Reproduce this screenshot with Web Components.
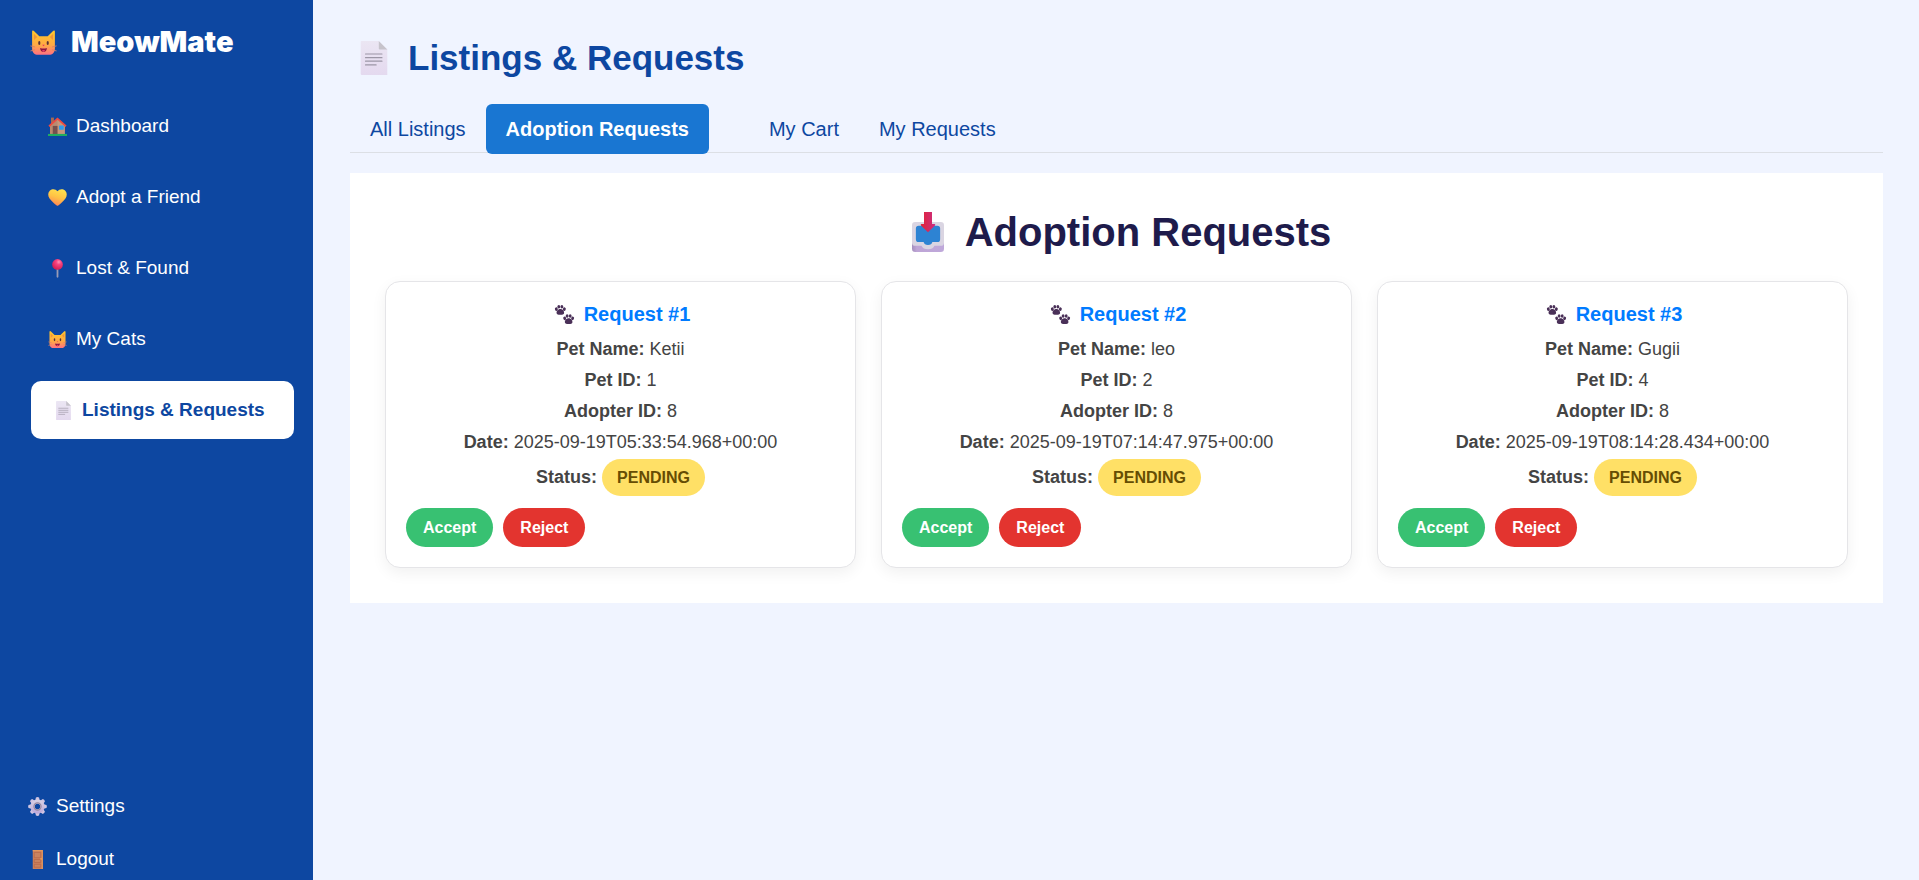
<!DOCTYPE html>
<html lang="en">
<head>
<meta charset="utf-8">
<title>MeowMate – Listings &amp; Requests</title>
<style>
  body { margin: 0; font-family: "Liberation Sans", Arial, sans-serif; background: #f0f4ff; }
</style>
</head>
<body>
<meow-app>
  <meow-sidebar slot="sidebar">
    <meow-nav-item icon="house">Dashboard</meow-nav-item>
    <meow-nav-item icon="heart">Adopt a Friend</meow-nav-item>
    <meow-nav-item icon="pin">Lost &amp; Found</meow-nav-item>
    <meow-nav-item icon="cat">My Cats</meow-nav-item>
    <meow-nav-item icon="page" active>Listings &amp; Requests</meow-nav-item>
    <meow-nav-item slot="footer" icon="gear" compact>Settings</meow-nav-item>
    <meow-nav-item slot="footer" icon="door" compact>Logout</meow-nav-item>
  </meow-sidebar>
  <meow-page-title>Listings &amp; Requests</meow-page-title>
  <meow-tabs>
    <meow-tab>All Listings</meow-tab>
    <meow-tab active>Adoption Requests</meow-tab>
    <meow-tab slot="mine">My Cart</meow-tab>
    <meow-tab slot="mine">My Requests</meow-tab>
  </meow-tabs>
  <meow-panel>
    <span slot="heading">Adoption Requests</span>
    <meow-request number="1" pet="Ketii" pet-id="1" adopter="8" date="2025-09-19T05:33:54.968+00:00"></meow-request>
    <meow-request number="2" pet="leo" pet-id="2" adopter="8" date="2025-09-19T07:14:47.975+00:00"></meow-request>
    <meow-request number="3" pet="Gugii" pet-id="4" adopter="8" date="2025-09-19T08:14:28.434+00:00"></meow-request>
  </meow-panel>
</meow-app>

<script>
const define = (name, render) => customElements.define(name, class extends HTMLElement {
  connectedCallback() {
    if (this.shadowRoot) return;
    const template = document.createElement('template');
    template.innerHTML = render(this);
    this.attachShadow({ mode: 'open' }).append(template.content.cloneNode(true));
  }
});

const tooth = Array.from({ length: 8 }, (_, i) =>
  `<path d="M12.2 6 13.4 0.8Q16 -0.4 18.6 0.8L19.8 6Z" transform="rotate(${i * 45} 16 16)"/>`).join('');
const paw = (x, y) => `<g transform="translate(${x} ${y})">
  <ellipse cx="2.3" cy="7" rx="2.400" ry="3" transform="rotate(-20 2.3 7)"/><ellipse cx="6.4" cy="3" rx="2.400" ry="3"/>
  <ellipse cx="11.600" cy="3" rx="2.400" ry="3"/><ellipse cx="15.700" cy="7" rx="2.400" ry="3" transform="rotate(20 15.7 7)"/>
  <path d="M9 6.800c4 0 6.800 4 6.300 7.200-.4 2.500-3.300 2.400-6.300 2.400s-5.900.1-6.300-2.400C2.200 10.800 5 6.800 9 6.800z"/></g>`;

const icons = {
  cat: `<defs><linearGradient id="g" x2="0" y2="1"><stop offset=".1" stop-color="#ffc42e"/><stop offset=".6" stop-color="#ffaa45"/><stop offset="1" stop-color="#ff6f83"/></linearGradient></defs>
    <path d="M2.500 3.200C2.500 1.500 4 1.600 5 2.700L11 8.500h10l6-5.800C28 1.600 29.500 1.500 29.500 3.200V23c0 5-3 7.500-7 7.500h-13c-4 0-7-2.500-7-7.500z" fill="url(#g)"/>
    <path d="M4.500 5.500 8.500 9.600 4.800 13z" fill="#f0963a"/><path d="M27.500 5.500 23.500 9.600 27.200 13z" fill="#f0963a"/>
    <ellipse cx="11" cy="16.500" rx="1.300" ry="2.400" fill="#5a3236"/><ellipse cx="21" cy="16.500" rx="1.300" ry="2.400" fill="#5a3236"/>
    <path d="M14.500 18.800h3L16 20.400z" fill="#e12a62"/><path d="M12 22.600q4 1.200 8 0c0 3-1.800 4.600-4 4.600s-4-1.600-4-4.600z" fill="#8d1740"/><path d="M14 25.500q2-1.200 4 0-1 1.400-2 1.400t-2-1.400z" fill="#f0426d"/>
    <path d="M0.500 20 6 21.300M0.500 26 6 24.600M31.500 20 26 21.300M31.500 26 26 24.600" stroke="#d98066" stroke-width="1" fill="none"/>`,
  house: `<path d="M5 1h5v10H5z" fill="#a56953"/><path d="M3.500 14 16 3l12.500 11v15h-25z" fill="#c7977c"/><path d="M3.500 14 16 3v26H3.500z" fill="#b98a70"/>
    <path d="M.8 14.500 16 .8l15.200 13.700-1.800 2.200L16 4.800 2.600 16.700z" fill="#ef4a40"/>
    <path d="M8 15h8v14H8z" fill="#76504e"/><rect x="18.500" y="14.500" width="8" height="7" rx="1" fill="#2f9cf0"/><path d="M0 28.500h32V32H0z" fill="#20ad60"/>`,
  heart: `<defs><linearGradient id="g" x1=".7" x2=".35" y2="1"><stop stop-color="#ffe34e"/><stop offset=".5" stop-color="#ffc245"/><stop offset="1" stop-color="#ff8257"/></linearGradient></defs>
    <path d="M16 5.500C19 1.300 25 .8 28.700 4.200c3.800 3.600 3.800 9.100.7 13.400C26 22.400 20.500 27 17.300 29.600q-1.300 1-2.600 0C11.500 27 6 22.400 2.600 17.600-.5 13.300-.5 7.800 3.300 4.200 7 .8 13 1.300 16 5.500z" fill="url(#g)"/>`,
  pin: `<defs><radialGradient id="g" cx=".62" cy=".27" r=".7"><stop stop-color="#ff93b5"/><stop offset=".35" stop-color="#f94380"/><stop offset="1" stop-color="#d61f55"/></radialGradient></defs>
    <path d="M14.500 16h3v14.500q-1.500 2-3 0z" fill="#9a9bb5"/><circle cx="16" cy="9.200" r="9" fill="url(#g)"/>`,
  page: `<defs><linearGradient id="g" x2="0" y2="1"><stop stop-color="#ebe6f3"/><stop offset="1" stop-color="#e4d9ef"/></linearGradient></defs>
    <path d="M4.500 0H20.500L28.500 8v24h-24q-1 0-1-1V1q0-1 1-1z" fill="url(#g)"/><path d="M20.500 0 28.500 8h-7q-1 0-1-1z" fill="#c6c3cb"/>
    <path d="M8 12.200h15.500M8 15.700h15.500M8 19h15.500M8 22.500h10" stroke="#9c96a6" stroke-width="1.100" stroke-linecap="round"/>`,
  gear: `<defs><linearGradient id="g" x2="0" y2="1"><stop stop-color="#d9d3e4"/><stop offset="1" stop-color="#bda8da"/></linearGradient></defs>
    <g fill="#cfc4e2">${tooth}</g><path fill-rule="evenodd" d="M16 4a12 12 0 1 0 0 24 12 12 0 1 0 0-24zm0 7.500a4.500 4.500 0 1 1 0 9 4.500 4.500 0 1 1 0-9z" fill="url(#g)"/><circle cx="16" cy="16" r="6" fill="none" stroke="#94889f" stroke-width="2"/>`,
  door: `<path d="M8 0h17v32H8z" fill="#cc805b"/><path d="M8 0h17v2H8zM23 0h2v32h-2z" fill="#e1975f"/><path d="M10.500 4h11v9h-11zM10.500 16h11v5h-11zM10.500 24h11v5h-11z" fill="#c9835f" stroke="#b66649" stroke-width="1.200"/><circle cx="22" cy="15" r="1.200" fill="#ffb54a"/>`,
  inbox: `<defs><linearGradient id="g" x2="1"><stop stop-color="#e32235"/><stop offset="1" stop-color="#c92f83"/></linearGradient><linearGradient id="b" x2="1"><stop stop-color="#a58fbd"/><stop offset=".15" stop-color="#bea5d6"/><stop offset="1" stop-color="#bfa8da"/></linearGradient></defs>
    <rect x="3.200" y="12" width="25.600" height="20" rx="2.600" fill="url(#b)"/>
    <path d="M5.800 8h20.400q2.600 0 2.600 2.600V24.500q0 2.500-2.500 2.500H21.200q-1.200 2.800-5.200 2.800T10.800 27H5.700q-2.500 0-2.500-2.500V10.600Q3.200 8 5.800 8z" fill="#dad5e2"/>
    <path d="M8.500 10.900h15q2.200 0 2.200 2v8.800q0 2.300-2.200 2.300H19.500q-.5 2.300-3.500 2.300T12.500 24h-4q-2.200 0-2.200-2.300v-8.800q0-2 2.200-2z" fill="#2d83d3"/>
    <path d="M12.800 0h6.400v9.500h2.200q.8.400.2 1.200L16 16.200l-5.600-5.500q-.6-.8.200-1.200h2.200z" fill="url(#g)"/>`,
  paws: `<g fill="#4a3058">${paw(0, 0)}${paw(14, 15.500)}</g>`
};

/* Square pictogram centred in a slightly wider slot */
define('meow-icon', el => `
  <style>
    :host { display: flex; justify-content: center; flex: none; width: var(--slot, 25px); }
    svg { display: block; width: var(--size, 19px); height: var(--size, 19px); overflow: visible; }
  </style>
  <svg viewBox="0 0 32 32" aria-hidden="true">${icons[el.getAttribute('name')]}</svg>`);

define('meow-app', () => `
  <style>
    :host { display: grid; grid-template-columns: 313px minmax(0, 1fr); min-height: 100vh; }
    main { padding: 38px 36px 38px 37px; }
  </style>
  <slot name="sidebar"></slot>
  <main><slot></slot></main>`);

define('meow-sidebar', () => `
  <style>
    :host { display: flex; flex-direction: column; box-sizing: border-box; padding: 25px 0 10px; background: #0d47a1; color: #fff; }
    .brand { display: flex; align-items: center; gap: 9px; padding: 0 25px; font: 900 29px/34px Inter, sans-serif; }
    meow-icon { --slot: 37px; --size: 27px; }
    nav { display: flex; flex-direction: column; gap: 13px; margin: 38px 19px 0 31px; }
    footer { display: flex; flex-direction: column; gap: 31px; margin-top: auto; padding: 0 25px; }
  </style>
  <div class="brand"><meow-icon name="cat"></meow-icon><span>MeowMate</span></div>
  <nav><slot></slot></nav>
  <footer><slot name="footer"></slot></footer>`);

define('meow-nav-item', el => `
  <style>
    :host { display: block; }
    a { display: flex; align-items: center; gap: 6px; height: 58px; padding: 0 14px; border-radius: 10px;
        color: #fff; font-size: 19px; line-height: 22px; text-decoration: none; white-space: nowrap; }
    :host([active]) a { padding: 0 20px; background: #fff; color: #0d47a1; font-weight: bold; }
    :host([compact]) a { height: 22px; padding: 0; }
  </style>
  <a href="#"${el.hasAttribute('active') ? ' aria-current="page"' : ''}><meow-icon name="${el.getAttribute('icon')}"></meow-icon><span><slot></slot></span></a>`);

define('meow-page-title', () => `
  <style>
    :host { display: block; margin-bottom: 26px; }
    h1 { display: flex; align-items: center; gap: 10px; margin: 0; color: #0d47a1; font-size: 35px; line-height: 40px; }
    meow-icon { --slot: 48px; --size: 34px; }
  </style>
  <h1><meow-icon name="page"></meow-icon><span><slot></slot></span></h1>`);

define('meow-tabs', () => `
  <style>
    :host { display: block; margin-bottom: 20px; }
    [role=tablist] { display: flex; border-bottom: 1px solid #dcdfe5; }
    .group { display: flex; margin-bottom: -2px; }
    .group + .group { margin-left: 40px; }
  </style>
  <div role="tablist"><div class="group"><slot></slot></div><div class="group"><slot name="mine"></slot></div></div>`);

define('meow-tab', el => `
  <style>
    :host { display: block; }
    button { height: 50px; padding: 0 20px; border: 0; border-radius: 6px; background: none; color: #0d47a1; font: 20px/24px "Liberation Sans", Arial, sans-serif; cursor: pointer; }
    :host([active]) button { background: #1976d2; color: #fff; font-weight: bold; }
  </style>
  <button type="button" role="tab" aria-selected="${el.hasAttribute('active')}"><slot></slot></button>`);

define('meow-panel', () => `
  <style>
    :host { display: block; padding: 35px; background: #fff; }
    h2 { display: flex; justify-content: center; align-items: center; gap: 11px; margin: 0 0 25px; color: #1e1b4b; font-size: 40px; line-height: 48px; }
    meow-icon { --slot: 52px; --size: 40px; }
    .cards { display: grid; grid-template-columns: repeat(auto-fit, minmax(350px, 1fr)); gap: 25px; }
  </style>
  <h2><meow-icon name="inbox"></meow-icon><slot name="heading"></slot></h2>
  <div class="cards"><slot></slot></div>`);

define('meow-request', el => {
  const row = (label, attr) => `<p><strong>${label}:</strong> ${el.getAttribute(attr)}</p>`;
  return `
  <style>
    :host { display: block; padding: 20px; border: 1px solid #e5e5e8; border-radius: 15px; background: #fff;
            box-shadow: 0 5px 15px rgba(0, 0, 0, .06); color: #444; font-size: 18px; line-height: 21px; text-align: center; }
    h3 { display: flex; justify-content: center; align-items: center; gap: 6px; margin: 0 0 13px; color: #007bff; font-size: 20px; line-height: 24px; }
    meow-icon { --slot: 27px; --size: 19px; }
    p { margin: 0 0 10px; }
    .status { display: flex; justify-content: center; align-items: baseline; gap: 5px; margin: -4px 0 12px; }
    .pill { padding: 0 15px; border-radius: 19px; background: #ffe066; color: #664d03; font-size: 16px; line-height: 37px; font-weight: bold; }
    .actions { display: flex; gap: 10px; }
    button { height: 39px; padding: 0 17px; border: 0; border-radius: 20px; background: #38c172; color: #fff; font: bold 16px/20px "Liberation Sans", Arial, sans-serif; cursor: pointer; }
    .reject { background: #e3342f; }
  </style>
  <h3><meow-icon name="paws"></meow-icon><span>Request #${el.getAttribute('number')}</span></h3>
  ${row('Pet Name', 'pet')}${row('Pet ID', 'pet-id')}${row('Adopter ID', 'adopter')}${row('Date', 'date')}
  <p class="status"><strong>Status:</strong><span class="pill">PENDING</span></p>
  <div class="actions"><button type="button">Accept</button><button type="button" class="reject">Reject</button></div>`;
});
</script>
</body>
</html>
